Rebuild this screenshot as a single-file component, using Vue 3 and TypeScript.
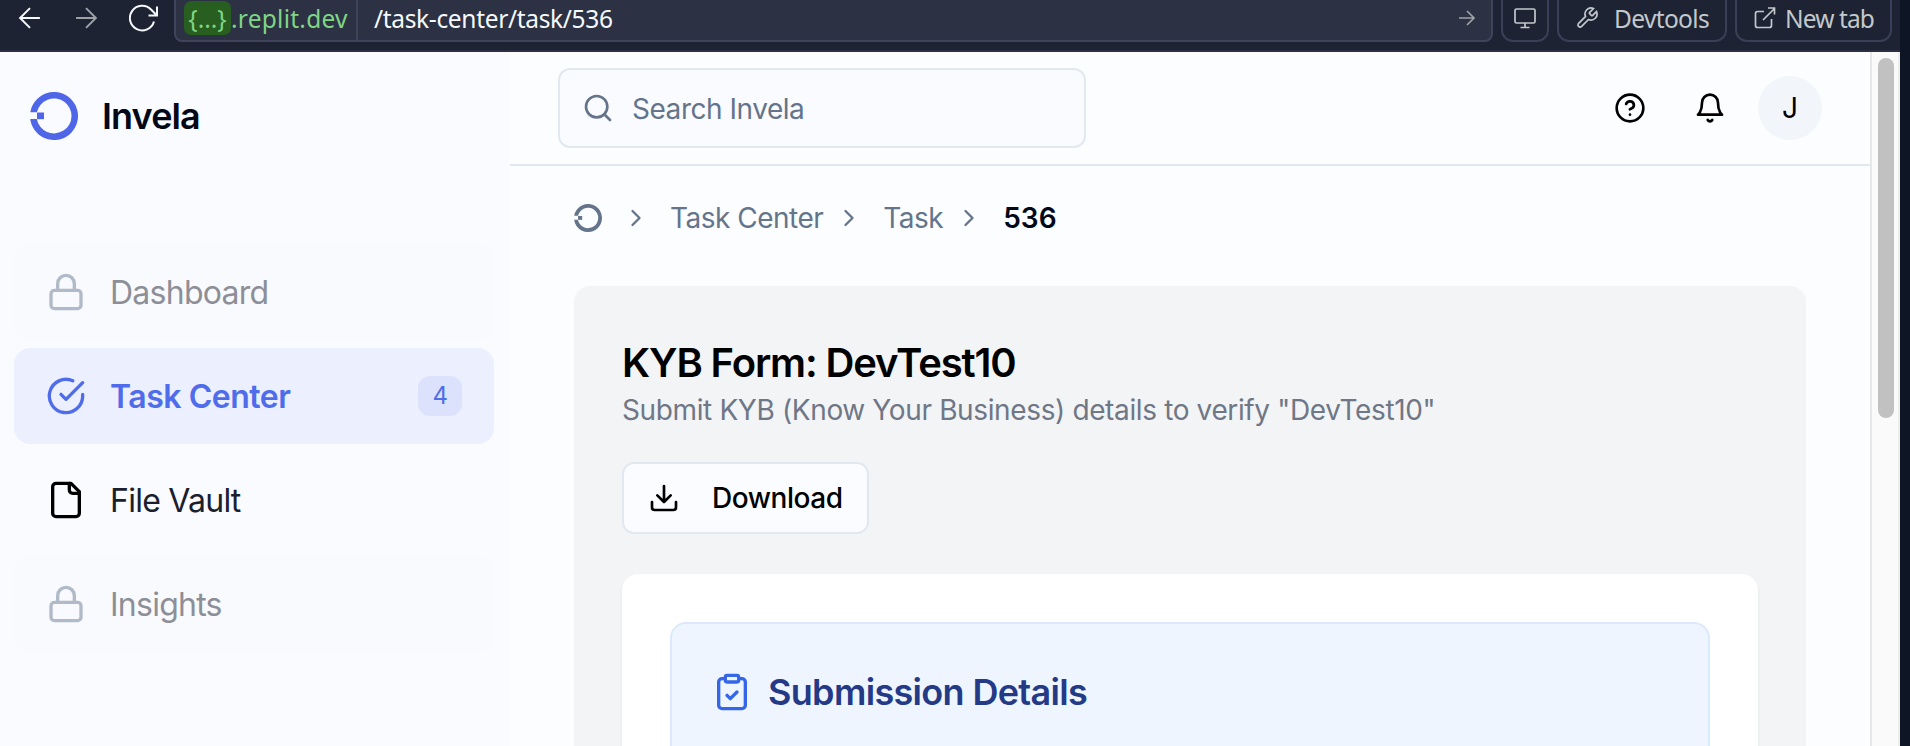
<script setup lang="ts">
interface NavItem {
  label: string
  icon: 'lock' | 'check' | 'file'
  state: 'locked' | 'active' | 'normal'
  badge?: number
}

const navItems: NavItem[] = [
  { label: 'Dashboard', icon: 'lock', state: 'locked' },
  { label: 'Task Center', icon: 'check', state: 'active', badge: 4 },
  { label: 'File Vault', icon: 'file', state: 'normal' },
  { label: 'Insights', icon: 'lock', state: 'locked' },
]
</script>

<template>
  <div class="screen">
    <header class="toolbar">
      <svg class="tb-icon back" viewBox="0 0 24 24" width="28" height="28"><path d="M20.5 12H4M12 3.500 3.500 12l8.500 8.500" /></svg>
      <svg class="tb-icon forward" viewBox="0 0 24 24" width="28" height="28"><path d="M3.500 12h17M12 3.500l8.500 8.500-8.500 8.500" /></svg>
      <svg class="tb-icon reload" viewBox="0 0 30 30" width="30" height="30"><path d="M25 18.500A12.300 12.300 0 1 1 22 6.500L28 12.500M28 3.500V12.500H19.500" /></svg>
      <div class="url">
        <div class="host"><span class="pill">{...}</span><span class="domain">.replit.dev</span></div>
        <div class="path">/task-center/task/536</div>
        <svg class="tb-icon go" viewBox="0 0 18 18" width="18" height="18"><path d="M1 9h15M9 2l7 7-7 7" /></svg>
      </div>
      <div class="tb-button monitor">
        <svg viewBox="0 0 24 24" width="24" height="24"><path d="M3.500 3h17a1.500 1.500 0 0 1 1.500 1.500v11a1.500 1.500 0 0 1-1.500 1.500h-17A1.500 1.500 0 0 1 2 15.500v-11A1.500 1.500 0 0 1 3.500 3ZM12 17v4.500M7.500 21.500h9" /></svg>
      </div>
      <div class="tb-button devtools">
        <svg viewBox="0 0 24 24" width="24" height="24"><path d="M14.700 6.300a1 1 0 0 0 0 1.400l1.600 1.600a1 1 0 0 0 1.400 0l3.770-3.770a6 6 0 0 1-7.940 7.940l-6.910 6.910a2.120 2.120 0 0 1-3-3l6.910-6.910a6 6 0 0 1 7.940-7.940l-3.760 3.760z" /></svg>
        <span>Devtools</span>
      </div>
      <div class="tb-button newtab">
        <svg viewBox="0 0 24 24" width="24" height="24"><path d="M18.500 13v6.500a2 2 0 0 1-2 2H4.500a2 2 0 0 1-2-2V7.500a2 2 0 0 1 2-2H11M15 2h6.500v6.500M10 14 21.500 2.500" /></svg>
        <span>New tab</span>
      </div>
    </header>

    <div class="app">
      <aside class="sidebar">
        <div class="brand">
          <svg class="logo" viewBox="0 0 48 48" width="48" height="48">
            <path d="M.3 20.300A24 24 0 1 1 .2 27H6.800A17.500 17.500 0 1 0 6.900 20.300Z" />
            <rect x="7" y="20.500" width="7" height="6.700" />
          </svg>
          <span>Invela</span>
        </div>
        <nav class="nav">
          <a v-for="item in navItems" :key="item.label" class="nav-item" :class="item.state">
            <svg class="line-icon" viewBox="0 0 24 24" width="40" height="40">
              <template v-if="item.icon === 'lock'">
                <rect x="3" y="11" width="18" height="11" rx="2" />
                <path d="M7 11V7a5 5 0 0 1 10 0v4" />
              </template>
              <template v-else-if="item.icon === 'check'">
                <path d="M22 11.080V12a10 10 0 1 1-5.930-9.140" />
                <path d="m9 11 3 3L22 4" />
              </template>
              <template v-else>
                <path d="M15 2H6a2 2 0 0 0-2 2v16a2 2 0 0 0 2 2h12a2 2 0 0 0 2-2V7Z" />
                <path d="M14 2v4a2 2 0 0 0 2 2h4" />
              </template>
            </svg>
            <span class="nav-label">{{ item.label }}</span>
            <span v-if="item.badge" class="badge">{{ item.badge }}</span>
          </a>
        </nav>
      </aside>

      <main class="main">
        <div class="topnav">
          <div class="search">
            <svg class="line-icon" viewBox="0 0 24 24" width="32" height="32"><circle cx="11" cy="11" r="8" /><path d="m21 21-4.300-4.300" /></svg>
            <span>Search Invela</span>
          </div>
          <div class="actions">
            <svg class="line-icon" viewBox="0 0 24 24" width="32" height="32"><circle cx="12" cy="12" r="10" /><path d="M9.090 9a3 3 0 0 1 5.830 1c0 2-3 3-3 3M12 17h.01" /></svg>
            <svg class="line-icon" viewBox="0 0 24 24" width="32" height="32"><path d="M6 8a6 6 0 0 1 12 0c0 7 3 9 3 9H3s3-2 3-9M10.300 21a1.940 1.940 0 0 0 3.400 0" /></svg>
            <span class="avatar">J</span>
          </div>
        </div>

        <div class="crumbs">
          <svg class="logo small" viewBox="0 0 48 48" width="28" height="28">
            <path d="M.3 20.300A24 24 0 1 1 .2 27H6.800A17.500 17.500 0 1 0 6.900 20.300Z" />
            <rect x="7" y="20.500" width="7" height="6.700" />
          </svg>
          <svg class="line-icon chev c1" viewBox="0 0 24 24" width="28" height="28"><path d="m9 18 6-6-6-6" /></svg>
          <span class="crumb">Task Center</span>
          <svg class="line-icon chev c2" viewBox="0 0 24 24" width="28" height="28"><path d="m9 18 6-6-6-6" /></svg>
          <span class="crumb">Task</span>
          <svg class="line-icon chev c3" viewBox="0 0 24 24" width="28" height="28"><path d="m9 18 6-6-6-6" /></svg>
          <span class="current">536</span>
        </div>

        <section class="panel">
          <h1>KYB Form: DevTest10</h1>
          <p class="subtitle">Submit KYB (Know Your Business) details to verify "DevTest10"</p>
          <button class="download">
            <svg class="line-icon" viewBox="0 0 24 24" width="32" height="32"><path d="M21 15v4a2 2 0 0 1-2 2H5a2 2 0 0 1-2-2v-4M7 10l5 5 5-5M12 15V3" /></svg>
            <span>Download</span>
          </button>
          <div class="card">
            <div class="details">
              <svg class="line-icon" viewBox="0 0 24 24" width="40" height="40"><rect x="8" y="2" width="8" height="4" rx="1" /><path d="M16 4h2a2 2 0 0 1 2 2v14a2 2 0 0 1-2 2H6a2 2 0 0 1-2-2V6a2 2 0 0 1 2-2h2M9 14l2 2 4-4" /></svg>
              <h2>Submission Details</h2>
            </div>
          </div>
        </section>
      </main>

      <div class="scrollbar"><div class="thumb"></div></div>
    </div>
  </div>
</template>

<style>
body {
  margin: 0;
  overflow: hidden;
}
</style>

<style scoped>
.screen {
  box-sizing: border-box;
  width: 1910px;
  height: 746px;
  padding-right: 10px;
  overflow: hidden;
  display: flex;
  flex-direction: column;
  background: #0e1525;
  font-family: Inter, "Liberation Sans", sans-serif;
  color: #020817;
}
.screen * {
  box-sizing: border-box;
}
.toolbar {
  flex: none;
  height: 52px;
  display: flex;
  align-items: flex-start;
  overflow: hidden;
  background: #1d2333;
  border-bottom: 2px solid #2b3042;
  padding-left: 16px;
  font-family: "Noto Sans", sans-serif;
  font-size: 24.500px;
}
.toolbar svg {
  flex: none;
  fill: none;
  stroke: #f5f9fc;
  stroke-width: 1.7;
}
.toolbar .back { margin-top: 4px; }
.toolbar .forward { margin: 4px 0 0 28px; stroke: #9da2a6; }
.toolbar .reload { margin: 3px 0 0 29px; stroke-width: 2; }
.url {
  width: 1319px;
  height: 62px;
  margin: -20px 0 0 15px;
  display: flex;
  align-items: flex-start;
  background: #2c3144;
  border: 2px solid #3f445b;
  border-radius: 8px;
  color: #f5f9fc;
}
.host {
  flex: none;
  width: 182px;
  height: 58px;
  padding: 19px 0 0 8px;
  display: flex;
  border-right: 2px solid #3f445b;
  line-height: 36px;
  color: #7fd585;
  white-space: nowrap;
}
.domain { letter-spacing: 0.25px; }
.pill {
  width: 47px;
  height: 34px;
  border-radius: 7px;
  background: #285e1f;
  line-height: 35px;
  text-align: center;
}
.path {
  flex: 1;
  padding: 19px 0 0 16px;
  line-height: 36px;
  letter-spacing: -0.33px;
}
.toolbar .go {
  margin: 27px 15px 0 0;
  stroke: #9da2a6;
}
.tb-button {
  flex: none;
  height: 62px;
  margin: -20px 0 0 8px;
  padding-top: 19px;
  display: flex;
  border: 2px solid #3a3f57;
  border-radius: 12px;
  line-height: 36px;
  color: #c2c8cc;
  white-space: nowrap;
}
.tb-button svg {
  margin-top: 5px;
  stroke: #c2c8cc;
}
.monitor { width: 48px; padding-left: 10px; }
.devtools { width: 170px; padding-left: 16px; gap: 15px; letter-spacing: -0.65px; }
.newtab { width: 157px; padding-left: 16px; gap: 8px; letter-spacing: -0.9px; }

.app {
  flex: 1;
  min-height: 0;
  display: flex;
  overflow: hidden;
  background: #fbfcff;
}
.line-icon {
  flex: none;
  fill: none;
  stroke: currentColor;
  stroke-width: 2;
  stroke-linecap: round;
  stroke-linejoin: round;
}
.sidebar {
  flex: none;
  width: 510px;
  background: #fafbff;
}
.brand {
  height: 192px;
  padding: 40px 0 0 30px;
  display: flex;
  align-items: flex-start;
  gap: 24px;
  font-size: 36px;
  line-height: 48px;
  font-weight: 600;
  letter-spacing: -0.9px;
}
.logo {
  flex: none;
  color: #4f66e8;
  fill: currentColor;
}
.logo.small { color: #64748b; }
.nav {
  padding: 0 16px 0 14px;
  display: flex;
  flex-direction: column;
  gap: 8px;
}
.nav-item {
  height: 96px;
  padding: 0 32px;
  display: flex;
  align-items: center;
  border-radius: 16px;
  font-size: 32px;
  letter-spacing: -0.75px;
  color: #1a202e;
}
.nav-label { margin-left: 24px; flex: 1; }
.locked { background: #f9fafd; color: #8d8f98; }
.locked svg { color: #b1bac8; }
.normal svg { color: #000; }
.active { background: #ebeffe; color: #4f6cea; font-weight: 600; letter-spacing: -0.47px; }
.badge {
  width: 44px;
  height: 40px;
  border-radius: 12px;
  background: #dce2fb;
  font-size: 24px;
  line-height: 40px;
  font-weight: 400;
  text-align: center;
}

.main {
  flex: 1;
  min-width: 0;
  background: #fcfdff;
}
.topnav {
  height: 114px;
  padding: 16px 48px 0;
  display: flex;
  justify-content: space-between;
  border-bottom: 2px solid #e2e8f0;
}
.search {
  width: 528px;
  height: 80px;
  padding-left: 22px;
  display: flex;
  align-items: center;
  gap: 18px;
  border: 2px solid #e2e8f0;
  border-radius: 12px;
  background: #fafbff;
  color: #64748b;
  font-size: 28px;
  letter-spacing: -0.47px;
}
.search span { padding-top: 2px; }
.actions {
  height: 80px;
  display: flex;
  align-items: center;
  gap: 48px;
  color: #000;
}
.avatar {
  width: 64px;
  height: 64px;
  margin-left: -16px;
  border-radius: 50%;
  background: #f2f5fa;
  font-size: 28px;
  line-height: 64px;
  text-align: center;
}
.crumbs {
  height: 120px;
  padding: 0 0 16px 64px;
  display: flex;
  align-items: center;
  color: #64748b;
  font-size: 28px;
}
.crumb, .current { flex: none; white-space: nowrap; }
.crumb { letter-spacing: -0.5px; }
.c1 { margin: 0 20px; }
.c2, .c3 { margin: 0 20px 0 12px; }
.current { color: #020817; font-weight: 600; }

.panel {
  width: 1232px;
  height: 700px;
  margin-left: 64px;
  padding: 57px 48px 0;
  border-radius: 16px;
  background: #f3f4f6;
}
h1 {
  margin: 0;
  font-size: 40px;
  line-height: 40px;
  font-weight: 600;
  letter-spacing: -1.13px;
  color: #000;
}
.subtitle {
  margin: 7px 0 32px;
  font-size: 28px;
  line-height: 40px;
  letter-spacing: -0.37px;
  color: #6f7786;
  white-space: nowrap;
}
.download {
  width: 247px;
  height: 72px;
  padding: 0 0 0 24px;
  display: flex;
  align-items: center;
  gap: 32px;
  border: 2px solid #e2e8f0;
  border-radius: 12px;
  background: #fbfcff;
  font: 500 28px Inter, sans-serif;
  letter-spacing: -0.45px;
  color: #000;
}
.card {
  height: 400px;
  margin-top: 40px;
  padding: 48px;
  border-radius: 16px;
  background: #fff;
  box-shadow: 0 2px 4px rgba(0, 0, 0, 0.05);
}
.details {
  height: 300px;
  padding: 48px 0 0 40px;
  display: flex;
  align-items: flex-start;
  gap: 16px;
  border: 2px solid #dce8fb;
  border-radius: 16px;
  background: #eef5fe;
  color: #3566e8;
}
h2 {
  margin: 0;
  font-size: 36px;
  line-height: 40px;
  font-weight: 600;
  letter-spacing: -0.67px;
  color: #243a87;
}

.scrollbar {
  flex: none;
  width: 30px;
  padding: 6px 0 0 6px;
  background: #fafafa;
  border-left: 2px solid #e7e7e7;
  border-right: 2px solid #ededed;
}
.thumb {
  width: 16px;
  height: 360px;
  border-radius: 8px;
  background: #c1c1c1;
}
</style>
